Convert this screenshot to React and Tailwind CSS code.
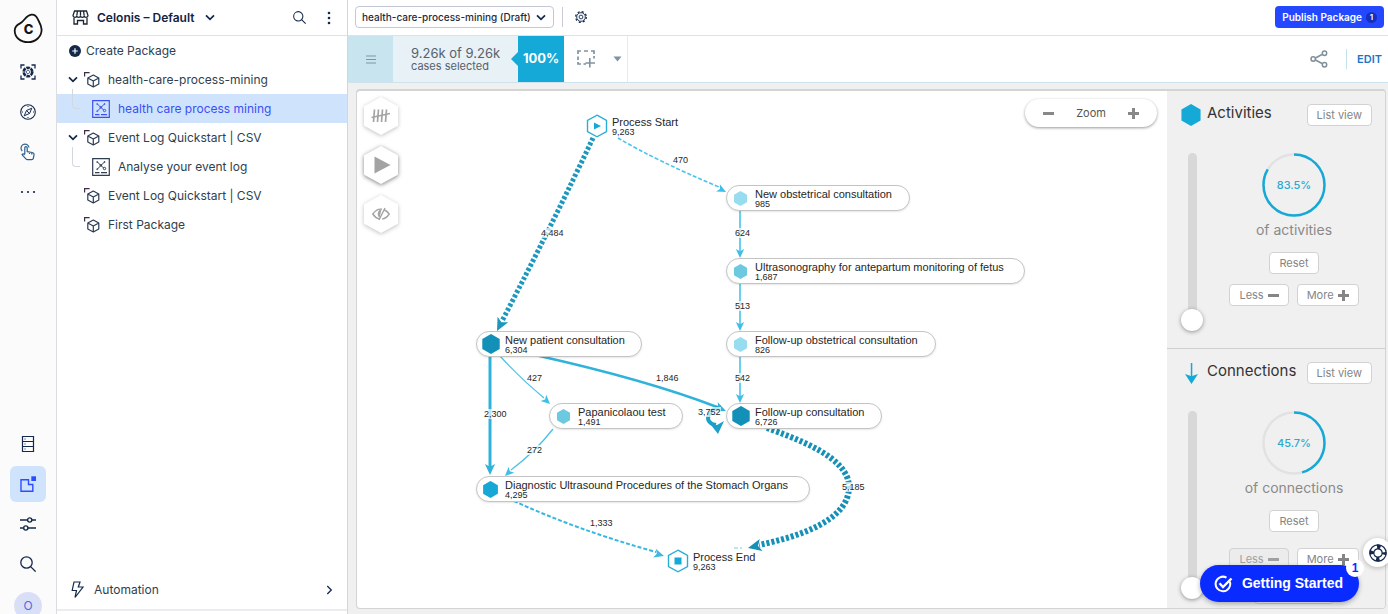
import React from "react";

const navy = "#14284b";

function LogoMark() {
  return (
    <svg width="30" height="31" viewBox="0 0 30 31" fill="none">
      <path
        d="M18.5 1.6C21.5 1.3 23.6 3.4 24.8 6.2c1.5 3.2 3.6 5.8 3.8 10.2.2 7.2-6 12.8-13.6 12.8C7.5 29.200 1.800 24.600 1.700 17.800c0-3.600 2-5.800 5.400-7.400C11.300 8.400 12.800 2.200 18.500 1.600Z"
        stroke="#141414"
        strokeWidth="1.800"
      />
      <text x="15.500" y="21" textAnchor="middle" fontFamily="Inter, sans-serif" fontWeight="800" fontSize="13" fill="#141414">
        C
      </text>
    </svg>
  );
}

function ScanIcon() {
  return (
    <svg width="16" height="16" viewBox="0 0 16 16" fill="none" stroke={navy}>
      <path d="M1 4.500V1h3.500M11.500 1H15v3.500M15 11.500V15h-3.500M4.500 15H1v-3.500" strokeWidth="1.300" />
      <circle cx="8" cy="8" r="4.300" strokeWidth="2.600" strokeDasharray="3.700 .8" />
      <path d="m8 5.800 2.200 2.200L8 10.200 5.800 8Z" strokeWidth=".8" />
    </svg>
  );
}

function CompassIcon() {
  return (
    <svg width="16" height="16" viewBox="0 0 16 16" fill="none" stroke={navy}>
      <circle cx="8" cy="8" r="7.300" strokeWidth="1.100" />
      <path d="M11.800 4.200 9.600 9.400 4.200 11.800l2.300-5.300ZM6.500 6.500l3 3" strokeWidth="1" />
      <path d="M8 2v1M8 13v1M2 8h1M13 8h1" strokeWidth="1" />
    </svg>
  );
}

function TapIcon() {
  return (
    <svg width="16" height="18" viewBox="0 0 16 18" fill="none" stroke="#2d5f8c" strokeWidth="1.200" strokeLinejoin="round">
      <path d="M2.300 8A4 4 0 1 1 9 4.500" />
      <path d="M4.800 11V4.800a1.200 1.200 0 0 1 2.400 0V8.600l5 .9c1.500.300 2 1 1.800 2.400l-.6 3.300c-.2 1-.8 1.500-1.700 1.500H7.500c-.7 0-1.200-.3-1.600-.9L2 11.600c.8-1.200 1.800-.9 2.800.4M9.500 9v2M11.800 9.600v1.800" />
    </svg>
  );
}

function ServerIcon() {
  return (
    <svg width="14" height="18" viewBox="0 0 14 18" fill="none" stroke={navy} strokeWidth="1.200">
      <path d="M1.500 1.500h11v15h-11ZM1.500 6.500h11M1.500 11.500h11" />
      <path d="M3.500 4h1M3.500 9h1M3.500 14h1" />
    </svg>
  );
}

function StudioIcon() {
  return (
    <svg width="16" height="16" viewBox="0 0 16 16" fill="none">
      <path d="M8.500 3.700H1v11.600h11.800V8.500H8.500Z" stroke="#2b4dff" strokeWidth="1.400" />
      <path d="M11.300.3H16V5h-4.700Z" fill="#2b4dff" />
    </svg>
  );
}

function SlidersIcon() {
  return (
    <svg width="16" height="14" viewBox="0 0 16 14" fill="none" stroke={navy} strokeWidth="1.400">
      <path d="M0 3h7.500M12 3h4M0 11h3.500M8 11h8" />
      <circle cx="9.700" cy="3" r="2.100" />
      <circle cx="5.800" cy="11" r="2.100" />
    </svg>
  );
}

function SearchIcon({ size = "16" }) {
  return (
    <svg width={size} height={size} viewBox="0 0 16 16" fill="none" stroke={navy} strokeWidth="1.300">
      <circle cx="6.500" cy="6.500" r="5.700" />
      <path d="m10.600 10.600 5 5" />
    </svg>
  );
}

function StoreIcon() {
  return (
    <svg width="17" height="15" viewBox="0 0 17 15" fill="none" stroke="#1c2430" strokeWidth="1.300">
      <path d="M2.500 1h12l1.500 4.500c0 2.400-3.700 2.400-3.800.2-.1 2.200-3.600 2.200-3.700 0-.1 2.200-3.600 2.200-3.700 0C4.700 7.900 1 7.900 1 5.500ZM4.800 5.500 5.500 1M8.500 5.500V1M12.200 5.500 11.500 1" />
      <path d="M2 8v6h3.500v-3.500h6V14H15V8" />
    </svg>
  );
}

function Chevron({ width = "10", stroke = navy }) {
  return (
    <svg width={width} height="7" viewBox="0 0 10 7" fill="none" className="shrink-0">
      <path d="m1 1.300 4 4 4-4" stroke={stroke} strokeWidth="1.700" />
    </svg>
  );
}

function PackageIcon() {
  return (
    <svg width="16" height="16" viewBox="0 0 16 16" fill="none" stroke="#2a3a52" className="shrink-0">
      <path d="M.6 4.500V.6h5" stroke="#3c2c44" strokeWidth="1.200" />
      <path d="M9.300 3 14.800 6v6l-5.500 3-5.500-3V6ZM3.800 6l5.500 3 5.500-3M9.300 9v6" strokeWidth="1.200" strokeLinejoin="round" />
    </svg>
  );
}

function AnalysisIcon() {
  return (
    <svg width="18" height="18" viewBox="0 0 18 18" fill="none" stroke="currentColor" className="shrink-0">
      <path d="M.7.7h16.600v16.600H.7Z" strokeWidth="1.200" />
      <path d="M3 14.700h4.500M9 14.700h6" strokeWidth="1.300" />
      <path d="m5.500 4 3.300 3.500L12.500 4M8.800 7.500l-3.300 3.500M8.800 7.500l3 2.500" strokeWidth="1" />
      <circle cx="12.500" cy="10.500" r="1.200" />
      <circle cx="8.800" cy="7.300" r=".8" />
      <circle cx="5.200" cy="11.200" r=".5" />
      <circle cx="5.200" cy="4" r=".5" />
      <circle cx="12.600" cy="4" r=".5" />
    </svg>
  );
}

function RailButton({ label, active, children }) {
  return (
    <div className="flex h-10 items-center justify-center">
      <button
        aria-label={label}
        className={
          active
            ? "flex size-9 items-center justify-center rounded-md bg-[#d0e3fd]"
            : "flex size-9 items-center justify-center rounded-md"
        }
      >
        {children}
      </button>
    </div>
  );
}

function Rail() {
  return (
    <nav className="flex w-[57px] shrink-0 flex-col border-r border-[#dcdde4] bg-[#fbfbfc]">
      <a href="#home" aria-label="Celonis" className="flex h-[52px] items-center justify-center pt-1">
        <LogoMark />
      </a>
      <RailButton label="Scan"><ScanIcon /></RailButton>
      <RailButton label="Explore"><CompassIcon /></RailButton>
      <RailButton label="Actions"><TapIcon /></RailButton>
      <RailButton label="More">
        <svg width="16" height="4" viewBox="0 0 16 4" fill={navy}>
          <circle cx="2" cy="2" r="1.100" />
          <circle cx="8" cy="2" r="1.100" />
          <circle cx="14" cy="2" r="1.100" />
        </svg>
      </RailButton>
      <div className="flex-1" />
      <RailButton label="Data"><ServerIcon /></RailButton>
      <RailButton label="Studio" active><StudioIcon /></RailButton>
      <RailButton label="Settings"><SlidersIcon /></RailButton>
      <RailButton label="Search"><SearchIcon /></RailButton>
      <div className="flex h-[30px] justify-center overflow-hidden pt-2">
        <button className="size-7 shrink-0 rounded-full bg-[#dadff8] text-xs text-[#5468d8]">O</button>
      </div>
    </nav>
  );
}

function PackageRow({ label, open }) {
  return (
    <a href="#package" className="flex h-[29px] items-center pl-[11px]">
      <span className="flex w-4 shrink-0">{open && <Chevron />}</span>
      <PackageIcon />
      <span className="pl-2">{label}</span>
    </a>
  );
}

function ChildRow({ label, selected }) {
  return (
    <a
      href="#analysis"
      className={
        selected
          ? "flex h-[29px] items-center bg-[#d0e3fd] pl-[15px] text-[#3a50f5]"
          : "flex h-[29px] items-center pl-[15px]"
      }
    >
      <span className="-mt-5 mr-3 h-5 w-2 shrink-0 rounded-bl border-b border-l border-[#d3d7e0]" />
      <AnalysisIcon />
      <span className="pl-2">{label}</span>
    </a>
  );
}

function Sidebar() {
  return (
    <aside className="flex w-[291px] shrink-0 flex-col border-r border-[#d3d6de] bg-white text-[12px] text-[#2f3e50]">
      <header className="flex h-9 shrink-0 items-center border-b border-[#dfe1e6] pr-[10px] pl-[15px]">
        <StoreIcon />
        <button className="flex items-center gap-[10px] pl-2 font-semibold text-[#14233f]">
          Celonis – Default
          <Chevron />
        </button>
        <div className="flex-1" />
        <button aria-label="Search packages"><SearchIcon size="13" /></button>
        <button aria-label="Package menu" className="ml-[15px] px-1.5">
          <svg width="4" height="14" viewBox="0 0 4 14" fill={navy}>
            <circle cx="2" cy="2" r="1.300" />
            <circle cx="2" cy="7" r="1.300" />
            <circle cx="2" cy="12" r="1.300" />
          </svg>
        </button>
      </header>
      <button className="flex h-[29px] shrink-0 items-center gap-[5px] pl-3">
        <svg width="12" height="12" viewBox="0 0 12 12">
          <circle cx="6" cy="6" r="6" fill={navy} />
          <path d="M6 3.200v5.600M3.200 6h5.600" stroke="#fff" strokeWidth="1.200" />
        </svg>
        Create Package
      </button>
      <PackageRow label="health-care-process-mining" open />
      <ChildRow label="health care process mining" selected />
      <PackageRow label="Event Log Quickstart | CSV" open />
      <ChildRow label="Analyse your event log" />
      <PackageRow label="Event Log Quickstart | CSV" />
      <PackageRow label="First Package" />
      <div className="flex-1" />
      <a href="#automation" className="mb-[3px] flex h-10 items-center border-b-2 border-[#ececf0] pr-[14px] pl-[14px]">
        <svg width="13" height="18" viewBox="0 0 13 18" fill="none" stroke={navy} strokeWidth="1.200">
          <path d="M3 1h6L7.300 6H12L4 16.500 5.500 9.500H1.200Z" />
        </svg>
        <span className="flex-1 pl-[10px]">Automation</span>
        <svg width="7" height="10" viewBox="0 0 7 10" fill="none" stroke={navy} strokeWidth="1.300">
          <path d="m1.300 1 4 4-4 4" />
        </svg>
      </a>
    </aside>
  );
}

function TopBar() {
  return (
    <header className="flex h-9 shrink-0 items-center border-b border-[#dfe1e6] bg-white pr-1 pb-px pl-[7px]">
      <div className="relative flex">
        <select
          aria-label="Package version"
          className="h-[22px] w-[199px] appearance-none rounded border border-[#c3c7d6] bg-white px-1.5 text-[10px] font-medium text-[#1f2a3d]"
        >
          <option>health-care-process-mining (Draft)</option>
        </select>
        <span className="pointer-events-none absolute top-[8px] right-2 flex"><Chevron /></span>
      </div>
      <span className="ml-2 h-5 w-px bg-[#c9ccd8]" />
      <button aria-label="Package settings" className="ml-3">
        <svg width="12" height="12" viewBox="0 0 12 12" fill="none" stroke={navy}>
          <circle cx="6" cy="6" r="5.300" strokeWidth="1.300" strokeDasharray="2.100 2.063" />
          <circle cx="6" cy="6" r="4.300" strokeWidth=".9" />
          <circle cx="6" cy="6" r="1.900" strokeWidth=".9" />
        </svg>
      </button>
      <div className="flex-1" />
      <button className="flex h-[22px] items-center gap-1 rounded bg-[#2448ff] px-[7px] text-[10px] font-semibold text-white">
        Publish Package
        <span className="flex size-[11px] items-center justify-center rounded-full bg-[#1730b8] text-[8px]">1</span>
      </button>
    </header>
  );
}

function Toolbar() {
  return (
    <div className="flex h-[47px] shrink-0 border-b border-[#cfe3ee] bg-white">
      <button aria-label="Menu" className="flex w-[45px] items-center justify-center bg-[#c8e4ef]">
        <svg width="10" height="9" viewBox="0 0 10 9" stroke="#7e95a3" strokeWidth="1.200">
          <path d="M0 1h10M0 4.500h10M0 8h10" />
        </svg>
      </button>
      <div className="flex flex-col justify-center bg-[#e8f1f5] pl-[18px] text-[#56616b]">
        <div className="text-[13px] leading-[13px]">9.26k of 9.26k</div>
        <div className="text-[11px] leading-3">cases selected</div>
      </div>
      <div className="flex items-center bg-[#e8f1f5] pl-[11px]">
        <svg width="7" height="14" viewBox="0 0 7 14"><path d="M7 0v14L0 7Z" fill="#15a9d7" /></svg>
      </div>
      <div className="flex w-[46px] items-center justify-center bg-[#15a9d7] text-[13px] font-bold text-white">100%</div>
      <div className="flex items-center border-r border-[#e0eef4] pr-[5px] pl-[13px]">
        <button aria-label="Add selection">
          <svg width="19" height="18" viewBox="0 0 19 18" fill="none" stroke="#7f93a2" strokeWidth="1.700">
            <path d="M1 4V1h3M7 1h4M14 1h3v3M1 6.500v3.500M1 12v2h3M6.500 14H9M17 6v2.500" />
            <path d="M12.800 8v9.500M8.500 13h9.500" strokeWidth="1.600" />
          </svg>
        </button>
        <button aria-label="Selection options" className="ml-[17px]">
          <svg width="9" height="6" viewBox="0 0 9 6" fill="#7f93a2"><path d="M.5.5h8l-4 5Z" /></svg>
        </button>
      </div>
      <div className="flex-1" />
      <div className="flex items-center pr-1.5">
        <button aria-label="Share">
          <svg width="18" height="18" viewBox="0 0 18 18" fill="none" stroke="#7f8f9c" strokeWidth="1.500">
            <circle cx="3.200" cy="9" r="2.200" />
            <circle cx="14.500" cy="3.300" r="2.200" />
            <circle cx="14.500" cy="14.700" r="2.200" />
            <path d="m5.500 8 6.500-3.500M5.500 10l6.500 3.500" />
          </svg>
        </button>
        <span className="ml-[18px] h-5 w-px bg-[#c3e2ea]" />
        <button className="pl-[10px] text-[11px] font-semibold text-[#1c75c4]">EDIT</button>
      </div>
    </div>
  );
}

function HexButton({ label, strong, children }) {
  return (
    <button
      aria-label={label}
      className={
        strong
          ? "flex drop-shadow-[0_1px_2px_rgba(0,0,0,0.5)]"
          : "flex drop-shadow-[0_1px_2px_rgba(0,0,0,0.25)]"
      }
    >
      <svg width="34" height="38" viewBox="0 0 34 38" fill="none">
        <path d="M17 0 33.500 9a2 2 0 0 1 .5 1v18a2 2 0 0 1-.5 1L17 38 .5 29A2 2 0 0 1 0 28V10a2 2 0 0 1 .5-1Z" fill="#fff" />
        {children}
      </svg>
    </button>
  );
}

const nodes = [
  { name: "New obstetrical consultation", count: "985", place: "left-[369px] top-[94px] w-[184px]", fill: "#97dcef", size: "15" },
  { name: "Ultrasonography for antepartum monitoring of fetus", count: "1,687", place: "left-[369px] top-[167px] w-[299px]", fill: "#6dc9e0", size: "15" },
  { name: "Follow-up obstetrical consultation", count: "826", place: "left-[369px] top-[240px] w-[210px]", fill: "#97dcef", size: "15" },
  { name: "Follow-up consultation", count: "6,726", place: "left-[369px] top-[312px] w-[156px]", fill: "#1290b8", size: "20" },
  { name: "New patient consultation", count: "6,304", place: "left-[119px] top-[240px] w-[166px]", fill: "#1290b8", size: "20" },
  { name: "Papanicolaou test", count: "1,491", place: "left-[192px] top-[312px] w-[134px]", fill: "#6dc9e0", size: "15" },
  { name: "Diagnostic Ultrasound Procedures of the Stomach Organs", count: "4,295", place: "left-[119px] top-[385px] w-[334px]", fill: "#17a7d5", size: "17" },
];

const edgeLabels = [
  { text: "4,484", place: "left-[184px] top-[137px]" },
  { text: "470", place: "left-[316px] top-[64px]" },
  { text: "624", place: "left-[378px] top-[137px]" },
  { text: "513", place: "left-[378px] top-[210px]" },
  { text: "542", place: "left-[378px] top-[282px]" },
  { text: "427", place: "left-[170px] top-[282px]" },
  { text: "1,846", place: "left-[299px] top-[282px]" },
  { text: "2,300", place: "left-[127px] top-[318px]" },
  { text: "3,752", place: "left-[341px] top-[316px]" },
  { text: "272", place: "left-[170px] top-[354px]" },
  { text: "1,333", place: "left-[233px] top-[427px]" },
  { text: "5,185", place: "left-[485px] top-[391px]" },
];

function Hexagon({ size, fill }) {
  return (
    <svg width={size} height={size} viewBox="0 0 20 20">
      <path d="M10 0 18.700 5v10L10 20 1.300 15V5Z" fill={fill} />
    </svg>
  );
}

function NodeText({ name, count }) {
  return (
    <span className="flex flex-col">
      <span className="text-[11px] leading-3">{name}</span>
      <span className="text-[9px] leading-[8px]">{count}</span>
    </span>
  );
}

function ActivityNode({ name, count, place, fill, size }) {
  return (
    <div className={"absolute flex h-[26px] items-center rounded-full border border-[#c4c4c4] bg-white whitespace-nowrap shadow-[0_1px_2px_rgba(0,0,0,0.1)] " + place}>
      <span className="flex w-7 justify-center pr-px"><Hexagon size={size} fill={fill} /></span>
      <NodeText name={name} count={count} />
    </div>
  );
}

function TerminalNode({ name, count, place, children }) {
  return (
    <div className={"absolute flex items-center gap-1 whitespace-nowrap " + place}>
      <svg width="22" height="24" viewBox="0 0 22 24">
        <path d="M11 1.200 20.500 6.500v11L11 22.800 1.500 17.500v-11Z" fill="#fff" stroke="#2aaed6" strokeWidth="1.400" />
        {children}
      </svg>
      <NodeText name={name} count={count} />
    </div>
  );
}

function ArrowHead({ x, y, angle, scale = 1, fill }) {
  return <path d="M0 0-10-4.600-7.500 0l-2.500 4.600Z" fill={fill} transform={`translate(${x} ${y}) rotate(${angle}) scale(${scale})`} />;
}

function Edges() {
  return (
    <svg width="720" height="517" viewBox="0 0 720 517" fill="none" className="absolute top-0 left-0">
      <path d="M236 47Q196 132 145 230" stroke="#1c97bd" strokeWidth="5" strokeDasharray="3 2" />
      <ArrowHead x={140} y={240} angle={117} scale={1.300} fill="#1c97bd" />
      <path d="M261 47Q300 70 362 96" stroke="#4bc3e9" strokeWidth="1.600" strokeDasharray="4 2" />
      <ArrowHead x={369} y={101} angle={27} scale={0.900} fill="#3fbfe8" />
      <path d="M383 120v40M383 193v40M383 266v40" stroke="#6bd0ef" strokeWidth="2" />
      <ArrowHead x={383} y={167} angle={90} scale={0.900} fill="#3fbfe8" />
      <ArrowHead x={383} y={240} angle={90} scale={0.900} fill="#3fbfe8" />
      <ArrowHead x={383} y={312} angle={90} scale={0.900} fill="#3fbfe8" />
      <path d="M133 265v112" stroke="#2fb3da" strokeWidth="3" />
      <ArrowHead x={133} y={384} angle={90} scale={1.100} fill="#2fb3da" />
      <path d="M143 265Q162 286 187 307" stroke="#4bc3e9" strokeWidth="1.300" />
      <ArrowHead x={193} y={313} angle={43} scale={0.900} fill="#3fbfe8" />
      <path d="M196 338Q178 361 154 379" stroke="#4bc3e9" strokeWidth="1.300" />
      <ArrowHead x={148} y={385} angle={136} scale={0.900} fill="#3fbfe8" />
      <path d="M178 264Q290 289 360 316" stroke="#2fb3da" strokeWidth="2.500" />
      <path d="M364 316C350 318 346 332 359 334" stroke="#1c9fc8" strokeWidth="4" />
      <ArrowHead x={369} y={320} angle={22} scale={1.100} fill="#2fb3da" />
      <path d="M367 330 361 343 354 334 360 334Z" fill="#1c9fc8" />
      <path d="M157 410Q220 439 299 461" stroke="#3ab7de" strokeWidth="2" strokeDasharray="4 2" />
      <ArrowHead x={307} y={465} angle={17} scale={1} fill="#3fb9e0" />
      <path d="M410 337C440 348 492 366 492 396C492 430 440 446 402 454" stroke="#1590b6" strokeWidth="6" strokeDasharray="3 2" />
      <ArrowHead x={391} y={457} angle={167} scale={1.350} fill="#1590b6" />
      <path d="M377 457h8" stroke="#7ccbe2" strokeWidth="1" strokeDasharray="4 2" />
    </svg>
  );
}

function ProcessMap() {
  return (
    <div className="relative min-w-0 flex-1 overflow-hidden rounded-l bg-white font-['Liberation_Sans',Arial,sans-serif] text-[#262626]">
      <Edges />
      {edgeLabels.map((l) => (
        <span key={l.text} className={"absolute bg-white/70 text-[9px] leading-[10px] " + l.place}>{l.text}</span>
      ))}
      <TerminalNode name="Process Start" count="9,263" place="left-[229px] top-[23px]">
        <path d="m8 8.500 7 3.500-7 3.500Z" fill="#15a9d7" />
      </TerminalNode>
      <TerminalNode name="Process End" count="9,263" place="left-[310px] top-[458px]">
        <path d="M7.500 8.500h7v7h-7Z" fill="#15a9d7" />
      </TerminalNode>
      {nodes.map((n) => (
        <ActivityNode key={n.name} {...n} />
      ))}

      <div className="absolute top-[6px] left-[7px] flex flex-col gap-[11px]">
        <HexButton label="Case counts">
          <path d="M10.500 12.500 9.500 25M14.500 12.500l-1 12.500M18.500 12.500l-1 12.500M22.500 12.500l-1 12.500M7.500 20.500 26 16.500" stroke="#a3a3a3" strokeWidth="1.700" />
        </HexButton>
        <HexButton label="Animate" strong>
          <path d="M10.500 10.500 26.500 19l-16 8.500Z" fill="#a3a3a3" />
        </HexButton>
        <HexButton label="Hide">
          <path d="M18 14.300C14 13.500 11 16 8.800 19c1.800 2.600 3.700 4.300 6.200 4.900M20.500 15c2 .8 3.500 2.400 4.700 4-1.800 2.700-4 4.700-7 5M21 13l-6 12" stroke="#a3a3a3" strokeWidth="1.400" />
          <path d="M17.500 14.500c-4 0-5 6-2 8.500Z" fill="#a3a3a3" />
        </HexButton>
      </div>

      <div className="absolute top-2 right-[10px] flex h-[28px] w-[132px] items-center justify-between rounded-full bg-white px-[18px] text-[#888] shadow-[0_1px_3px_rgba(0,0,0,0.4)]">
        <button aria-label="Zoom out"><MinusGlyph /></button>
        <span className="font-[Inter,sans-serif] text-[11px] text-[#555]">Zoom</span>
        <button aria-label="Zoom in"><PlusGlyph /></button>
      </div>
    </div>
  );
}

function MinusGlyph() {
  return (
    <svg width="11" height="11" viewBox="0 0 11 11" fill="currentColor">
      <path d="M0 4h11v3H0Z" />
    </svg>
  );
}

function PlusGlyph() {
  return (
    <svg width="11" height="11" viewBox="0 0 11 11" fill="currentColor">
      <path d="M4 0h3v4h4v3H7v4H4V7H0V4h4Z" />
    </svg>
  );
}

function SmallButton({ children, disabled }) {
  return (
    <button
      disabled={disabled}
      className="flex h-[22px] items-center gap-1 rounded-sm border border-[#d2d2d2] bg-white px-[9px] text-[11px] text-[#858585] disabled:bg-[#ececec] disabled:text-[#a0a0a0]"
    >
      {children}
    </button>
  );
}

function Ring({ percent }) {
  return (
    <div className="relative flex size-16 items-center justify-center">
      <svg width="64" height="64" viewBox="0 0 64 64" fill="none" className="absolute inset-0">
        <circle cx="32" cy="32" r="30.500" stroke="#e2e2e2" strokeWidth="2.500" />
        <circle
          cx="32"
          cy="32"
          r="30.500"
          stroke="#15a9d7"
          strokeWidth="2.500"
          pathLength="100"
          strokeDasharray={`${percent} 100`}
          transform="rotate(-90 32 32)"
        />
      </svg>
      <span className="text-[11px] font-medium text-[#2aa9d2]">{percent}%</span>
    </div>
  );
}

function FilterSection({ title, icon, percent, caption, lessDisabled, className, sliderClass }) {
  return (
    <section className={"shrink-0 px-[13px] pt-[13px] " + className}>
      <div className="flex items-start">
        <span className="flex h-[22px] w-[22px] items-center justify-center">{icon}</span>
        <h2 className="flex-1 pl-[5px] text-[15px] leading-[18px] text-[#333]">{title}</h2>
        <SmallButton>List view</SmallButton>
      </div>
      <div className="flex pt-[27px]">
        <input
          type="range"
          aria-label={title}
          min="0"
          max="100"
          defaultValue="100"
          className={"w-6 shrink-0 appearance-none bg-transparent [writing-mode:vertical-lr] [&::-webkit-slider-runnable-track]:h-full [&::-webkit-slider-runnable-track]:w-[9px] [&::-webkit-slider-runnable-track]:rounded-full [&::-webkit-slider-runnable-track]:bg-[#d8d8d8] [&::-webkit-slider-thumb]:-ml-[7px] [&::-webkit-slider-thumb]:size-[22px] [&::-webkit-slider-thumb]:appearance-none [&::-webkit-slider-thumb]:rounded-full [&::-webkit-slider-thumb]:bg-white [&::-webkit-slider-thumb]:shadow-[0_1px_4px_rgba(0,0,0,0.4)] " + sliderClass}
        />
        <div className="flex flex-1 flex-col items-center pl-[12px]">
          <Ring percent={percent} />
          <div className="pt-[3px] text-[14px] leading-5 text-[#8a8a8a]">{caption}</div>
          <div className="pt-3"><SmallButton>Reset</SmallButton></div>
          <div className={lessDisabled ? "flex gap-2 pt-4" : "flex gap-2 pt-[10px]"}>
            <SmallButton disabled={lessDisabled}>Less <MinusGlyph /></SmallButton>
            <SmallButton>More <PlusGlyph /></SmallButton>
          </div>
          {lessDisabled && <div className="mt-3 h-[22px] w-20 rounded-sm border border-[#d2d2d2] bg-white" />}
        </div>
      </div>
    </section>
  );
}

function FilterPanel() {
  return (
    <div className="flex w-[218px] shrink-0 flex-col overflow-hidden bg-[#f0f0f0]">
      <FilterSection
        title="Activities"
        percent={83.5}
        caption="of activities"
        icon={<Hexagon size="22" fill="#15a9d7" />}
        className="h-[258px] border-b border-[#cfcfcf]"
        sliderClass="h-[178px]"
      />
      <FilterSection
        title="Connections"
        percent={45.7}
        caption="of connections"
        lessDisabled
        icon={
          <svg width="13" height="21" viewBox="0 0 13 21" fill="#15a9d7">
            <path d="M5.800 0h1.500v13l5.700-2L6.500 21 0 11l5.800 2Z" />
          </svg>
        }
        className=""
        sliderClass="h-[188px]"
      />
    </div>
  );
}

export default function App() {
  return (
    <div className="relative flex h-screen overflow-hidden bg-white font-[Inter,sans-serif]">
      <Rail />
      <Sidebar />
      <main className="flex min-w-0 flex-1 flex-col bg-[#f0f0f0]">
        <TopBar />
        <Toolbar />
        <div className="flex min-h-0 flex-1 pt-[6px] pr-0.5 pb-[5px] pl-2">
          <div className="flex min-w-0 flex-1 overflow-hidden rounded border border-t-2 border-[#d4d4d4]">
            <ProcessMap />
            <FilterPanel />
          </div>
        </div>
      </main>

      <button
        aria-label="Help"
        className="absolute right-[-4px] bottom-[47px] flex size-[29px] items-center justify-center rounded-full bg-white shadow-[0_1px_5px_rgba(0,0,0,0.25)]"
      >
        <svg width="18" height="18" viewBox="0 0 18 18" fill="none">
          <circle cx="9" cy="9" r="6.200" stroke={navy} strokeWidth="4.600" strokeDasharray="3.500 6.239" strokeDashoffset="1.750" />
          <circle cx="9" cy="9" r="8.200" stroke={navy} strokeWidth="1.200" />
          <circle cx="9" cy="9" r="4.200" stroke={navy} strokeWidth="1.200" />
        </svg>
      </button>
      <button className="absolute right-[29px] bottom-3 flex h-[37px] items-center gap-[9px] rounded-full bg-[#0a2bff] pr-4 pl-[14px] font-['Liberation_Sans',Arial,sans-serif] text-[14px] font-bold text-white shadow-[0_2px_5px_rgba(0,0,0,0.3)]">
        <svg width="19" height="18" viewBox="0 0 19 18" fill="none" stroke="#fff" strokeWidth="2">
          <path d="M15.800 6.500A7.300 7.300 0 1 1 12.500 2.600" />
          <path d="m5.500 8.300 3.500 3.700L17.500 3.500" strokeWidth="2.400" />
        </svg>
        Getting Started
        <span className="absolute -top-1.5 -right-[5px] flex size-[18px] items-center justify-center rounded-full bg-white text-[12px] text-[#0a2bff]">1</span>
      </button>
    </div>
  );
}
